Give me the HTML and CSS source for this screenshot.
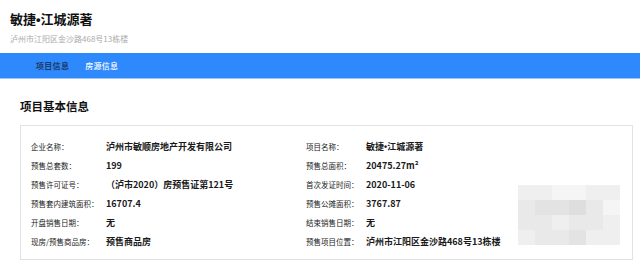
FILE: index.html
```html
<!DOCTYPE html>
<html lang="zh">
<head>
<meta charset="utf-8">
<link rel="stylesheet" href="styles.css">
</head>
<body>
<header class="head">
  <h1 class="title">敏捷<span class="dot">•</span>江城源著</h1>
  <p class="addr">泸州市江阳区金沙路468号13栋楼</p>
</header>
<nav class="nav">
  <a class="nav-item active">项目信息</a>
  <a class="nav-item">房源信息</a>
</nav>
<section class="section">
  <h2 class="sec-title">项目基本信息</h2>
  <div class="card">
    <div class="grid">
      <span class="lbl">企业名称：</span><span class="val">泸州市敏顺房地产开发有限公司</span>
      <span class="lbl">项目名称：</span><span class="val">敏捷<span class="dot">•</span>江城源著</span>
      <span class="lbl">预售总套数：</span><span class="val">199</span>
      <span class="lbl">预售总面积：</span><span class="val">20475.27m²</span>
      <span class="lbl">预售许可证号：</span><span class="val">（泸市2020）房预售证第121号</span>
      <span class="lbl">首次发证时间：</span><span class="val">2020-11-06</span>
      <span class="lbl">预售套内建筑面积：</span><span class="val">16707.4</span>
      <span class="lbl">预售公摊面积：</span><span class="val">3767.87</span>
      <span class="lbl">开盘销售日期：</span><span class="val">无</span>
      <span class="lbl">结束销售日期：</span><span class="val">无</span>
      <span class="lbl">现房/预售商品房：</span><span class="val">预售商品房</span>
      <span class="lbl">预售项目位置：</span><span class="val">泸州市江阳区金沙路468号13栋楼</span>
    </div>
    <div class="mosaic">
      <i class="c1"></i><i class="c1"></i><i class="c0"></i><i class="c0"></i><i class="c1"></i><i class="c1"></i>
      <i class="c2"></i><i class="c3"></i><i class="c3"></i><i class="c4"></i><i class="c2"></i><i class="c0"></i>
      <i class="c2"></i><i class="c2"></i><i class="c1"></i><i class="c2"></i><i class="c2"></i><i class="c1"></i>
      <i class="c1"></i><i class="c2"></i><i class="c2"></i><i class="c3"></i><i class="c1"></i><i class="c1"></i>
    </div>
  </div>
</section>
</body>
</html>
```
FILE: styles.css
```css
* { box-sizing: border-box; margin: 0; padding: 0; }
body {
  margin: 0;
  background: #fff;
  font-family: "Noto Sans CJK SC", "Noto Sans", sans-serif;
  color: #222;
  width: 640px;
  height: 266px;
  overflow: hidden;
}
.head { padding: 9px 10px 0; height: 53px; }
.title { font-size: 13px; font-weight: 700; line-height: 20px; color: #111; }
.dot { font-family: "Liberation Sans", Arial, sans-serif; }
.addr { font-size: 8px; line-height: 12px; color: #aaaaaa; margin-top: 3px; }
.nav {
  height: 26px;
  background: #2e89fd;
  border-bottom: 1px solid #9cc4f5;
  display: flex;
  align-items: center;
  padding-left: 36px;
  gap: 16px;
}
.nav-item { font-size: 8px; color: #fff; letter-spacing: 0.3px; font-weight: 500; }
.nav-item.active { color: #1d3b6a; font-weight: 700; }
.section { padding: 19px 7px 0 20px; }
.sec-title { font-size: 11.5px; font-weight: 700; line-height: 16px; color: #111; }
.card {
  position: relative;
  margin-top: 11px;
  border: 1px solid #e2e2e2;
  height: 135px;
  padding: 11px 10px 0;
}
.grid {
  display: grid;
  grid-template-columns: 75px 200px 60px 1fr;
  grid-auto-rows: 19px;
  align-items: center;
}
.lbl { font-size: 7.5px; color: #222; white-space: nowrap; }
.val { font-size: 9px; font-weight: 700; color: #1a1a1a; white-space: nowrap; }
.mosaic {
  position: absolute;
  left: 497px;
  top: 59px;
  display: grid;
  grid-template-columns: repeat(6, 17px);
  grid-auto-rows: 15px;
}
.mosaic i { display: block; }
.c0 { background: #f5f5f5; }
.c1 { background: #efefef; }
.c2 { background: #e9e9e9; }
.c3 { background: #e3e3e3; }
.c4 { background: #dedede; }
```
